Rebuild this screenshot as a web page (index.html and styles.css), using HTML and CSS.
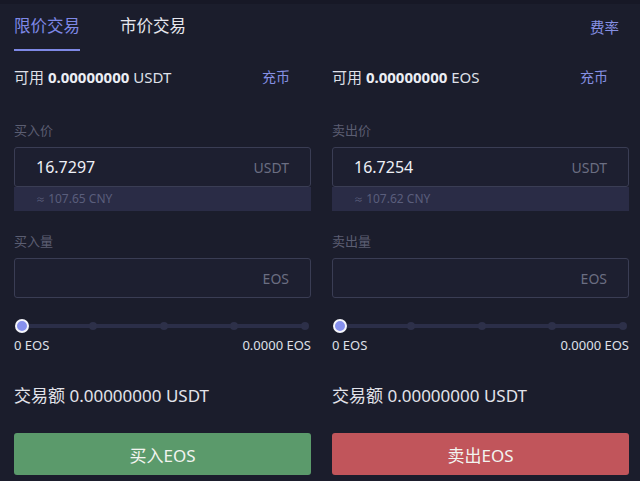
FILE: index.html
```html
<!DOCTYPE html>
<html lang="zh-CN">
<head>
    <meta charset="UTF-8">
    <meta name="viewport" content="width=device-width, initial-scale=1.0">
    <title>限价交易</title>
    <link rel="stylesheet" href="styles.css">
</head>
<body>
    <div class="tabs">
        <a class="tab active">限价交易</a>
        <a class="tab">市价交易</a>
        <a class="fee">费率</a>
    </div>
    <div class="panels">
        <div class="panel">
            <div class="balance">
                <span>可用 <b>0.00000000</b> USDT</span>
                <a class="deposit">充币</a>
            </div>
            <p class="label">买入价</p>
            <div class="field">
                <span class="value">16.7297</span>
                <span class="unit">USDT</span>
            </div>
            <div class="cny"><small>≈</small> 107.65 CNY</div>
            <p class="label">买入量</p>
            <div class="field">
                <span class="value"></span>
                <span class="unit">EOS</span>
            </div>
            <div class="slider">
                <span class="track"></span>
                <span class="dot"></span><span class="dot"></span><span class="dot"></span><span class="dot"></span><span class="dot"></span>
                <span class="knob"></span>
            </div>
            <div class="range">
                <span>0 EOS</span>
                <span>0.0000 EOS</span>
            </div>
            <div class="total">交易额 0.00000000 USDT</div>
            <button class="btn buy">买入EOS</button>
        </div>
        <div class="panel">
            <div class="balance">
                <span>可用 <b>0.00000000</b> EOS</span>
                <a class="deposit">充币</a>
            </div>
            <p class="label">卖出价</p>
            <div class="field">
                <span class="value">16.7254</span>
                <span class="unit">USDT</span>
            </div>
            <div class="cny"><small>≈</small> 107.62 CNY</div>
            <p class="label">卖出量</p>
            <div class="field">
                <span class="value"></span>
                <span class="unit">EOS</span>
            </div>
            <div class="slider">
                <span class="track"></span>
                <span class="dot"></span><span class="dot"></span><span class="dot"></span><span class="dot"></span><span class="dot"></span>
                <span class="knob"></span>
            </div>
            <div class="range">
                <span>0 EOS</span>
                <span>0.0000 EOS</span>
            </div>
            <div class="total">交易额 0.00000000 USDT</div>
            <button class="btn sell">卖出EOS</button>
        </div>
    </div>
</body>
</html>
```

FILE: styles.css
```css
body {
    margin: 0;
    background-color: #1b1d2c;
    color: #e4e5ec;
    font-family: "Noto Sans", "Noto Sans CJK SC", sans-serif;
    width: 640px;
    height: 481px;
    overflow: hidden;
}
.tabs {
    display: flex;
    align-items: flex-start;
    padding: 0 21px 0 14px;
    height: 51px;
    border-top: 4px solid #171826;
    box-sizing: border-box;
}
.tab {
    font-size: 16.5px;
    line-height: 22px;
    padding-top: 11px;
    padding-bottom: 12px;
    margin-right: 40px;
    color: #e6e7ee;
}
.tab.active {
    color: #7e88e6;
    border-bottom: 2px solid #7e88e6;
}
.fee {
    margin-left: auto;
    font-size: 14.5px;
    line-height: 20px;
    padding-top: 13px;
    color: #8690e4;
}
.panels {
    display: flex;
    gap: 21px;
    padding: 0 11px 0 14px;
}
.panel {
    flex: 1;
    min-width: 0;
}
.balance {
    display: flex;
    justify-content: space-between;
    align-items: center;
    font-size: 15px;
    height: 20px;
    margin-top: 15px;
    padding-right: 21px;
    color: #dfe0e8;
}
.balance b {
    font-weight: 700;
    color: #eceef4;
}
.deposit {
    font-size: 14px;
    color: #8690e4;
}
.label {
    margin: 35px 0 0;
    font-size: 13px;
    line-height: 18px;
    color: #5b5e72;
}
.field {
    display: flex;
    justify-content: space-between;
    align-items: center;
    margin-top: 8px;
    height: 40px;
    box-sizing: border-box;
    border: 1px solid #3a3d54;
    border-radius: 3px;
    padding: 0 21px 0 21px;
    background-color: #1d1f30;
}
.value {
    font-size: 16px;
    color: #eef0f6;
}
.unit {
    font-size: 14px;
    color: #6b6e82;
}
.cny {
    height: 24px;
    line-height: 24px;
    background-color: #2a2c46;
    padding-left: 22px;
    font-size: 12px;
    color: #5a5e7c;
}
.cny small {
    font-size: 9px;
}
.cny + .label {
    margin-top: 21px;
}
.slider {
    position: relative;
    height: 12px;
    margin-top: 22px;
    display: flex;
    justify-content: space-between;
    align-items: center;
    padding: 0 2px 0 4px;
}
.track {
    position: absolute;
    left: 8px;
    right: 4px;
    top: 4px;
    height: 4px;
    background-color: #2b2e48;
}
.dot {
    position: relative;
    width: 8px;
    height: 8px;
    border-radius: 50%;
    background-color: #2d3049;
}
.knob {
    position: absolute;
    left: 1px;
    top: -1px;
    width: 10px;
    height: 10px;
    border-radius: 50%;
    background-color: #8690ee;
    border: 2px solid #f4f5fb;
}
.range {
    display: flex;
    justify-content: space-between;
    margin-top: 4px;
    font-size: 13px;
    line-height: 18px;
    color: #dfe0e8;
}
.total {
    margin-top: 31px;
    font-size: 17px;
    line-height: 22px;
    color: #e2e3ea;
}
.btn {
    display: block;
    width: 100%;
    height: 42px;
    margin-top: 26px;
    border: none;
    border-radius: 3px;
    font-family: inherit;
    font-size: 17px;
    color: #f2f4f0;
}
.btn.buy {
    background-color: #5b9a6b;
}
.btn.sell {
    background-color: #c1555b;
}
```
